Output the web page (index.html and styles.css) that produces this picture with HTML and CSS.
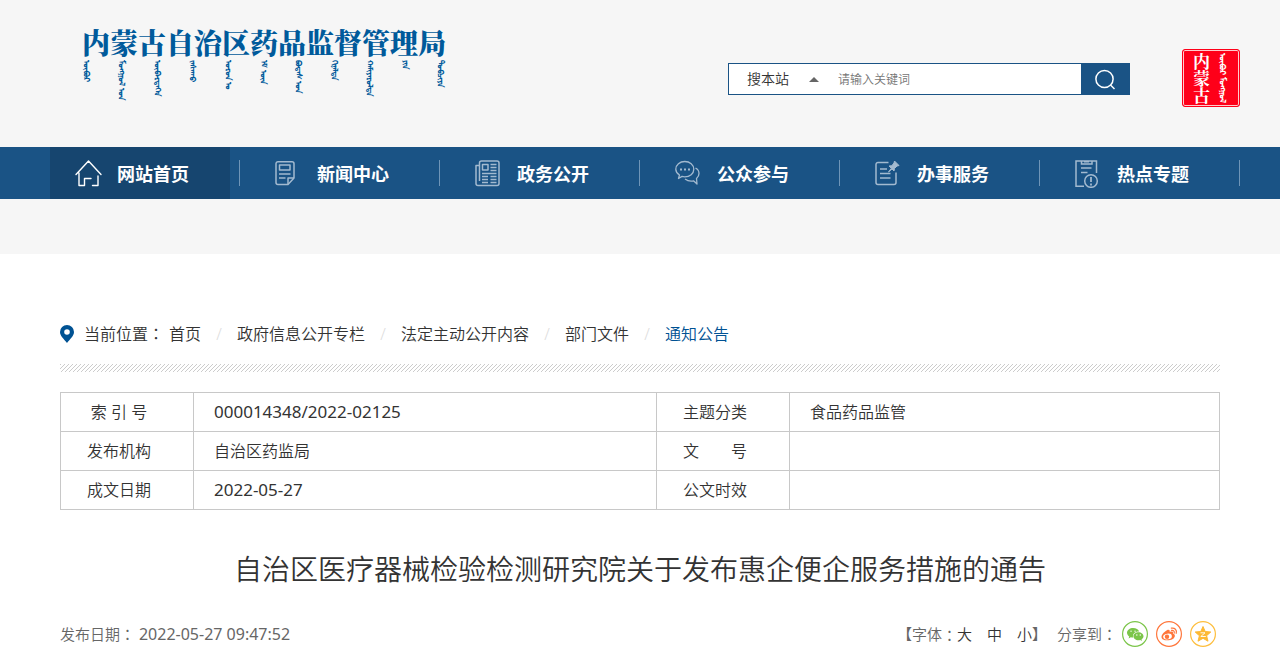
FILE: index.html
```
<!DOCTYPE html>
<html lang="zh-CN">
<head>
<meta charset="utf-8">
<meta name="viewport" content="width=device-width, initial-scale=1">
<title>自治区医疗器械检验检测研究院关于发布惠企便企服务措施的通告</title>
<link rel="stylesheet" href="styles.css">
</head>

<body>
  <div class="top">
    <div class="header wide">
      <a class="logo" href="#">
        <span class="logo_cn">内蒙古自治区药品监督管理局</span>
        <span class="logo_mn" lang="mn-Mong">
          <i>ᠥᠪᠥᠷ</i><i>ᠮᠣᠩᠭᠣᠯ ᠤᠨ</i><i>ᠥᠪᠡᠷᠲᠡᠭᠡᠨ</i><i>ᠵᠠᠰᠠᠬᠤ</i><i>ᠣᠷᠣᠨ ᠤ</i><i>ᠡᠮ ᠦᠨ</i><i>ᠪᠣᠳᠠᠰ ᠤᠨ</i><i>ᠬᠢᠨᠠᠯᠲᠠ</i><i>ᠬᠠᠮᠢᠶᠠᠷᠤᠯᠲᠠ</i><i>ᠶᠢᠨ</i><i>ᠲᠣᠪᠴᠢᠶᠠ</i>
        </span>
      </a>
      <form class="search" action="#">
        <select class="search_type" aria-label="搜索范围">
          <option>搜本站</option>
        </select>
        <svg class="arrow" width="10" height="5" viewBox="0 0 10 5"><path d="M0 5L5 0l5 5z" fill="#666"/></svg>
        <input class="search_text" type="text" placeholder="请输入关键词" aria-label="请输入关键词">
        <button class="search_btn" type="submit" aria-label="搜索">
          <svg width="22" height="22" viewBox="0 0 22 22" fill="none" stroke="#fff" stroke-width="1.5"><circle cx="10.500" cy="11" r="8.6"/><path d="M16.500 17l4 4"/></svg>
        </button>
      </form>
      <a class="seal" href="#">
        <span class="seal_cn">内蒙古</span>
        <span class="seal_mn" lang="mn-Mong">ᠥᠪᠥᠷ ᠮᠣᠩᠭᠣᠯ</span>
      </a>
    </div>
    <div class="nav">
      <ul class="wide">
        <li><a class="on" href="#">
          <svg width="27" height="27" viewBox="0 0 27 27" fill="none" stroke="#fff" stroke-width="1.4" stroke-linecap="round" stroke-linejoin="round"><path d="M1 14.5L13.5 1 26 14.5M4 13v12.5h5.500V18.500h6.500M23 16v9.500h-5.500"/></svg>网站首页</a></li>
        <li><a href="#">
          <svg width="27" height="27" viewBox="0 0 27 27" fill="none" stroke="#a3bad0" stroke-width="1.5" stroke-linejoin="round"><path d="M3 1.700h14a2 2 0 0 1 2 2V18l-6 6.500H3a2 2 0 0 1-2-2V3.700a2 2 0 0 1 2-2z"/><path d="M4.500 5h10.500v5H4.500zM4 14h11.500M4 18h6.500M13 24v-6h6"/></svg>新闻中心</a></li>
        <li><a href="#">
          <svg width="27" height="27" viewBox="0 0 27 27" fill="none" stroke="#a3bad0" stroke-width="1.500" stroke-linejoin="round"><path d="M4.500 21V3a2 2 0 0 1 2-2H22a2 2 0 0 1 2 2v20.500a2 2 0 0 1-2 2H3a2 2 0 0 1-2-2V5.500h3.500"/><path d="M7.500 4.500h5.500V10H7.500zM15.500 4.500h6M15.500 7.500h6M15.500 10.500h6M7 13.500h14.500M7 16.500h6M15.500 16.500h6M7 19.500h6M15.500 19.500h6M7 22.500h6M15.500 22.500h6"/></svg>政务公开</a></li>
        <li><a href="#">
          <svg width="27" height="27" viewBox="0 0 27 27" fill="none" stroke="#a3bad0" stroke-width="1.3" stroke-linejoin="round"><path d="M3.500 18.500l1-3.500C2.300 13.500.8 11.500.8 9.200.8 4.800 4.800 1.500 9.800 1.500s9 3.300 9 7.700-4 7.600-9 7.600c-1 0-2-.1-2.800-.4z"/><path d="M20.500 8c2 1 3.500 3 3.500 5.500 0 2-1 3.700-2.500 5l.5 5.500-3.500-3.200c-3.500.7-6.500-.3-8.500-1.800"/><path d="M5 9.500h2M9 9.500h2M13 9.500h2" stroke-width="2"/></svg>公众参与</a></li>
        <li><a href="#">
          <svg width="27" height="27" viewBox="0 0 27 27" fill="none" stroke="#a3bad0" stroke-width="1.500" stroke-linejoin="round"><path d="M13.500 2.500H3a2 2 0 0 0-2 2v18a2 2 0 0 0 2 2h16a2 2 0 0 0 2-2v-10M5 9h7M5 13.500h10.500M5 18h10.500"/><path d="M19.500 1l4.500 4.500-2 .5-2.500 2.500-.500 2.500-2-2-3.500 3 2.800-3.700L14 6l2.800-.3L19 3z" fill="#a3bad0" stroke-width="1"/></svg>办事服务</a></li>
        <li><a href="#">
          <svg width="27" height="29" viewBox="1 0 27 29" fill="none" stroke="#a3bad0" stroke-width="1.500"><path d="M10 27.300H2V2h20.500V14M7.500 2v3h10.500V2M10 2.800h5M7 9h10.500M7 13.500h6.500"/><circle cx="17" cy="22" r="6.300"/><path d="M17 18v5M17 24.500v2" stroke-width="1.800"/></svg>热点专题</a></li>
      </ul>
    </div>
  </div>

  <div class="main">
    <div class="crumb">
      <svg width="14" height="18" viewBox="0 0 14 18"><path d="M7 0a7 7 0 0 1 7 7c0 4-4 7-7 11C4 14 0 11 0 7a7 7 0 0 1 7-7zm0 4.200a2.800 2.800 0 1 0 0 5.600 2.800 2.800 0 0 0 0-5.600z" fill="#005293" fill-rule="evenodd"/></svg>
      <span class="here">当前位置<span class="colon" lang="zh-TW">：</span></span>
      <ul>
        <li><a href="#">首页</a></li>
        <li><a href="#">政府信息公开专栏</a></li>
        <li><a href="#">法定主动公开内容</a></li>
        <li><a href="#">部门文件</a></li>
        <li><a class="cur" href="#">通知公告</a></li>
      </ul>
    </div>
    <div class="stripe"></div>

    <table class="info">
      <tr><th>索 引 号</th><td class="num">000014348/2022-02125</td><th>主题分类</th><td>食品药品监管</td></tr>
      <tr><th>发布机构</th><td>自治区药监局</td><th>文　　号</th><td></td></tr>
      <tr><th>成文日期</th><td class="num">2022-05-27</td><th>公文时效</th><td></td></tr>
    </table>

    <h1>自治区医疗器械检验检测研究院关于发布惠企便企服务措施的通告</h1>

    <div class="meta">
      <div class="date">发布日期<span class="colon" lang="zh-TW">：</span> <span class="time">2022-05-27 09:47:52</span></div>
      <div class="tools">
        <div class="size">【字体<span class="colon" lang="zh-TW">：</span><button type="button">大</button><button type="button">中</button><button type="button">小</button>】</div>
        <span class="share_txt">分享到<span class="colon" lang="zh-TW">：</span></span>
        <div class="share">
          <a href="#" aria-label="微信"><svg width="26" height="26" viewBox="0 0 26 26"><circle cx="13" cy="13" r="12.400" fill="none" stroke="#7bc549" stroke-width="1.200"/><path d="M11.200 7C7.800 7 5 9.100 5 11.800c0 1.500.9 2.800 2.200 3.700l-.6 1.900 2.200-1.200c.8.200 1.500.3 2.300.3-.9-3.600 2.200-6.200 6-6C16.500 8.400 14 7 11.200 7z" fill="#7bc549"/><path d="M16.500 11.200c-2.900 0-5.100 1.800-5.100 4s2.200 4 5.100 4c.6 0 1.200-.1 1.700-.2l1.700.9-.4-1.500c1.200-.7 2-1.900 2-3.200 0-2.200-2.300-4-5-4z" fill="#7bc549"/><path d="M9 10.200h.1M13 10.200h.1M14.800 14h.1M18.200 14h.1" stroke="#fff" stroke-width="1.300" stroke-linecap="round"/></svg></a>
          <a href="#" aria-label="微博"><svg width="26" height="26" viewBox="0 0 26 26"><circle cx="13" cy="13" r="12.400" fill="none" stroke="#ff763b" stroke-width="1.200"/><path d="M11 9.200c1.600-.8 3.200-.3 2.700 1.700 2-.8 3.900-.5 3.200 1.500 3 .9 2.400 4.200-.5 5.800-3.500 2-10.900 1.500-10.900-2.300 0-2.500 3.200-5.600 5.500-6.700z" fill="#ff763b"/><ellipse cx="11.500" cy="15.500" rx="4.400" ry="2.900" fill="#fff" transform="rotate(-8 11.500 15.500)"/><circle cx="11" cy="15.700" r="2.200" fill="#ff763b"/><path d="M15.500 9.400c1.800-.4 3.200.9 2.700 2.700M15.300 7.200c3.400-.8 5.900 1.800 4.900 5.100" fill="none" stroke="#ff763b" stroke-width="1.200" stroke-linecap="round"/></svg></a>
          <a href="#" aria-label="QQ空间"><svg width="26" height="26" viewBox="0 0 26 26"><circle cx="13" cy="13" r="12.400" fill="none" stroke="#fdbe3d" stroke-width="1.200"/><path d="M13 5.500l2.200 5 5.600.5-4.200 3.700 1.400 5.500-5-2.900-5 2.900 1.400-5.500L5.200 11l5.600-.5z" fill="#fdb933" stroke="#fdb933" stroke-linejoin="round"/><path d="M10.500 11.800h4.500l-4.200 3.700h5" fill="none" stroke="#fff" stroke-width=".9"/></svg></a>
        </div>
      </div>
    </div>
  </div>
</body>
</html>
```
FILE: styles.css
```
* {margin:0;padding:0;box-sizing:border-box}
body {background:#fff;color:#333;font:350 16px/24px "Noto Sans","Noto Sans CJK SC",sans-serif}
ul,li {list-style:none}
a {color:inherit;text-decoration:none}
svg {display:block;flex:none}
i {font-style:normal}
button,input,select {font-family:inherit;font-weight:inherit;border:none;background:none;color:inherit}
button {cursor:pointer}
.colon {font-family:"Noto Sans CJK TC",sans-serif;line-height:1}

.wide {max-width:1200px;margin:0 auto}
.top {background:#f6f6f6;padding-bottom:55px}

.header {display:flex;align-items:flex-start;height:147px}
.logo {margin:24px auto 0 42px;color:#005a9b}
.logo_cn {display:block;font:900 28px/36px "Noto Serif CJK SC","Noto Sans CJK SC",serif;white-space:nowrap}
.logo_mn {display:flex;justify-content:space-between;height:38px;font-size:8px;line-height:10px;font-weight:bold}
.logo_mn i {writing-mode:vertical-lr;white-space:nowrap}

.search {display:flex;align-items:center;width:402px;height:32px;margin-top:63px;background:#fff;border:1px solid #1a5385}
.search_type {appearance:none;width:62px;margin-left:18px;font-size:14px;line-height:20px;color:#333}
.arrow {margin-right:19px}
.search_text {flex:1;min-width:0;height:30px;font-size:12px;outline:none}
.search_text::placeholder {color:#757575}
.search_btn {display:flex;align-items:center;justify-content:center;width:48px;height:30px;background:#1a5385}

.seal {display:flex;justify-content:space-between;align-items:center;width:58px;height:58px;margin:49px 0 0 52px;padding:0 9px;background:#fe0019;border:1px solid #fe0019;border-radius:3px;box-shadow:inset 0 0 0 1px #fcc;color:#fff}
.seal_cn {writing-mode:vertical-rl;font:700 17px/18px "Noto Serif CJK SC",serif}
.seal_mn {writing-mode:vertical-lr;white-space:nowrap;font-size:8px;line-height:14px;font-weight:bold}

.nav {background:#1a5385}
.nav ul {display:flex}
.nav li {flex:1;position:relative;padding:0 10px}
.nav li::after {content:"";position:absolute;right:0;top:13px;width:1px;height:26px;background:#6f95b8}
.nav a {display:flex;align-items:center;height:52px;padding:1px 0 0 25px;font-size:18px;font-weight:bold;color:#fff;white-space:nowrap}
.nav a.on {background:#16456f}
.nav svg {margin-right:15px}

.main {max-width:1160px;margin:0 auto;padding-top:68px}
.crumb {display:flex;align-items:center}
.here {margin:0 5px 0 10px}
.crumb ul {display:flex}
.crumb li {display:flex}
.crumb li + li::before {content:"/";width:36px;text-align:center;color:#ddd}
.crumb .cur {color:#005293}
.stripe {height:8px;margin:18px 0 20px;background:linear-gradient(135deg,#ccc 12.5%,#fff 12.5%,#fff 50%,#ccc 50%,#ccc 62.5%,#fff 62.5%) 0 0/4px 4px}

.info {width:100%;table-layout:fixed;border-collapse:collapse}
.info th,.info td {height:39px;border:1px solid #c8c8c8;font-weight:inherit;text-align:left}
.info th {width:133px;padding-right:16px;text-align:center}
.info td {padding-left:20px}
.info td:nth-child(2) {width:463px}
.info .num {font-size:17px;font-weight:400}

h1 {margin-top:39px;font-size:28px;line-height:40px;font-weight:350;text-align:center}

.meta {display:flex;justify-content:space-between;align-items:center;margin-top:32px;padding-right:4px;font-size:15px;color:#666}
.time {font-size:16px;font-weight:400}
.tools,.size,.share {display:flex;align-items:center}
.size button {margin-right:15px;font-size:15px;line-height:24px;color:#333}
.size button:last-of-type {margin-right:0}
.share_txt {margin:0 5px 0 10px}
.share {gap:8px}
```
